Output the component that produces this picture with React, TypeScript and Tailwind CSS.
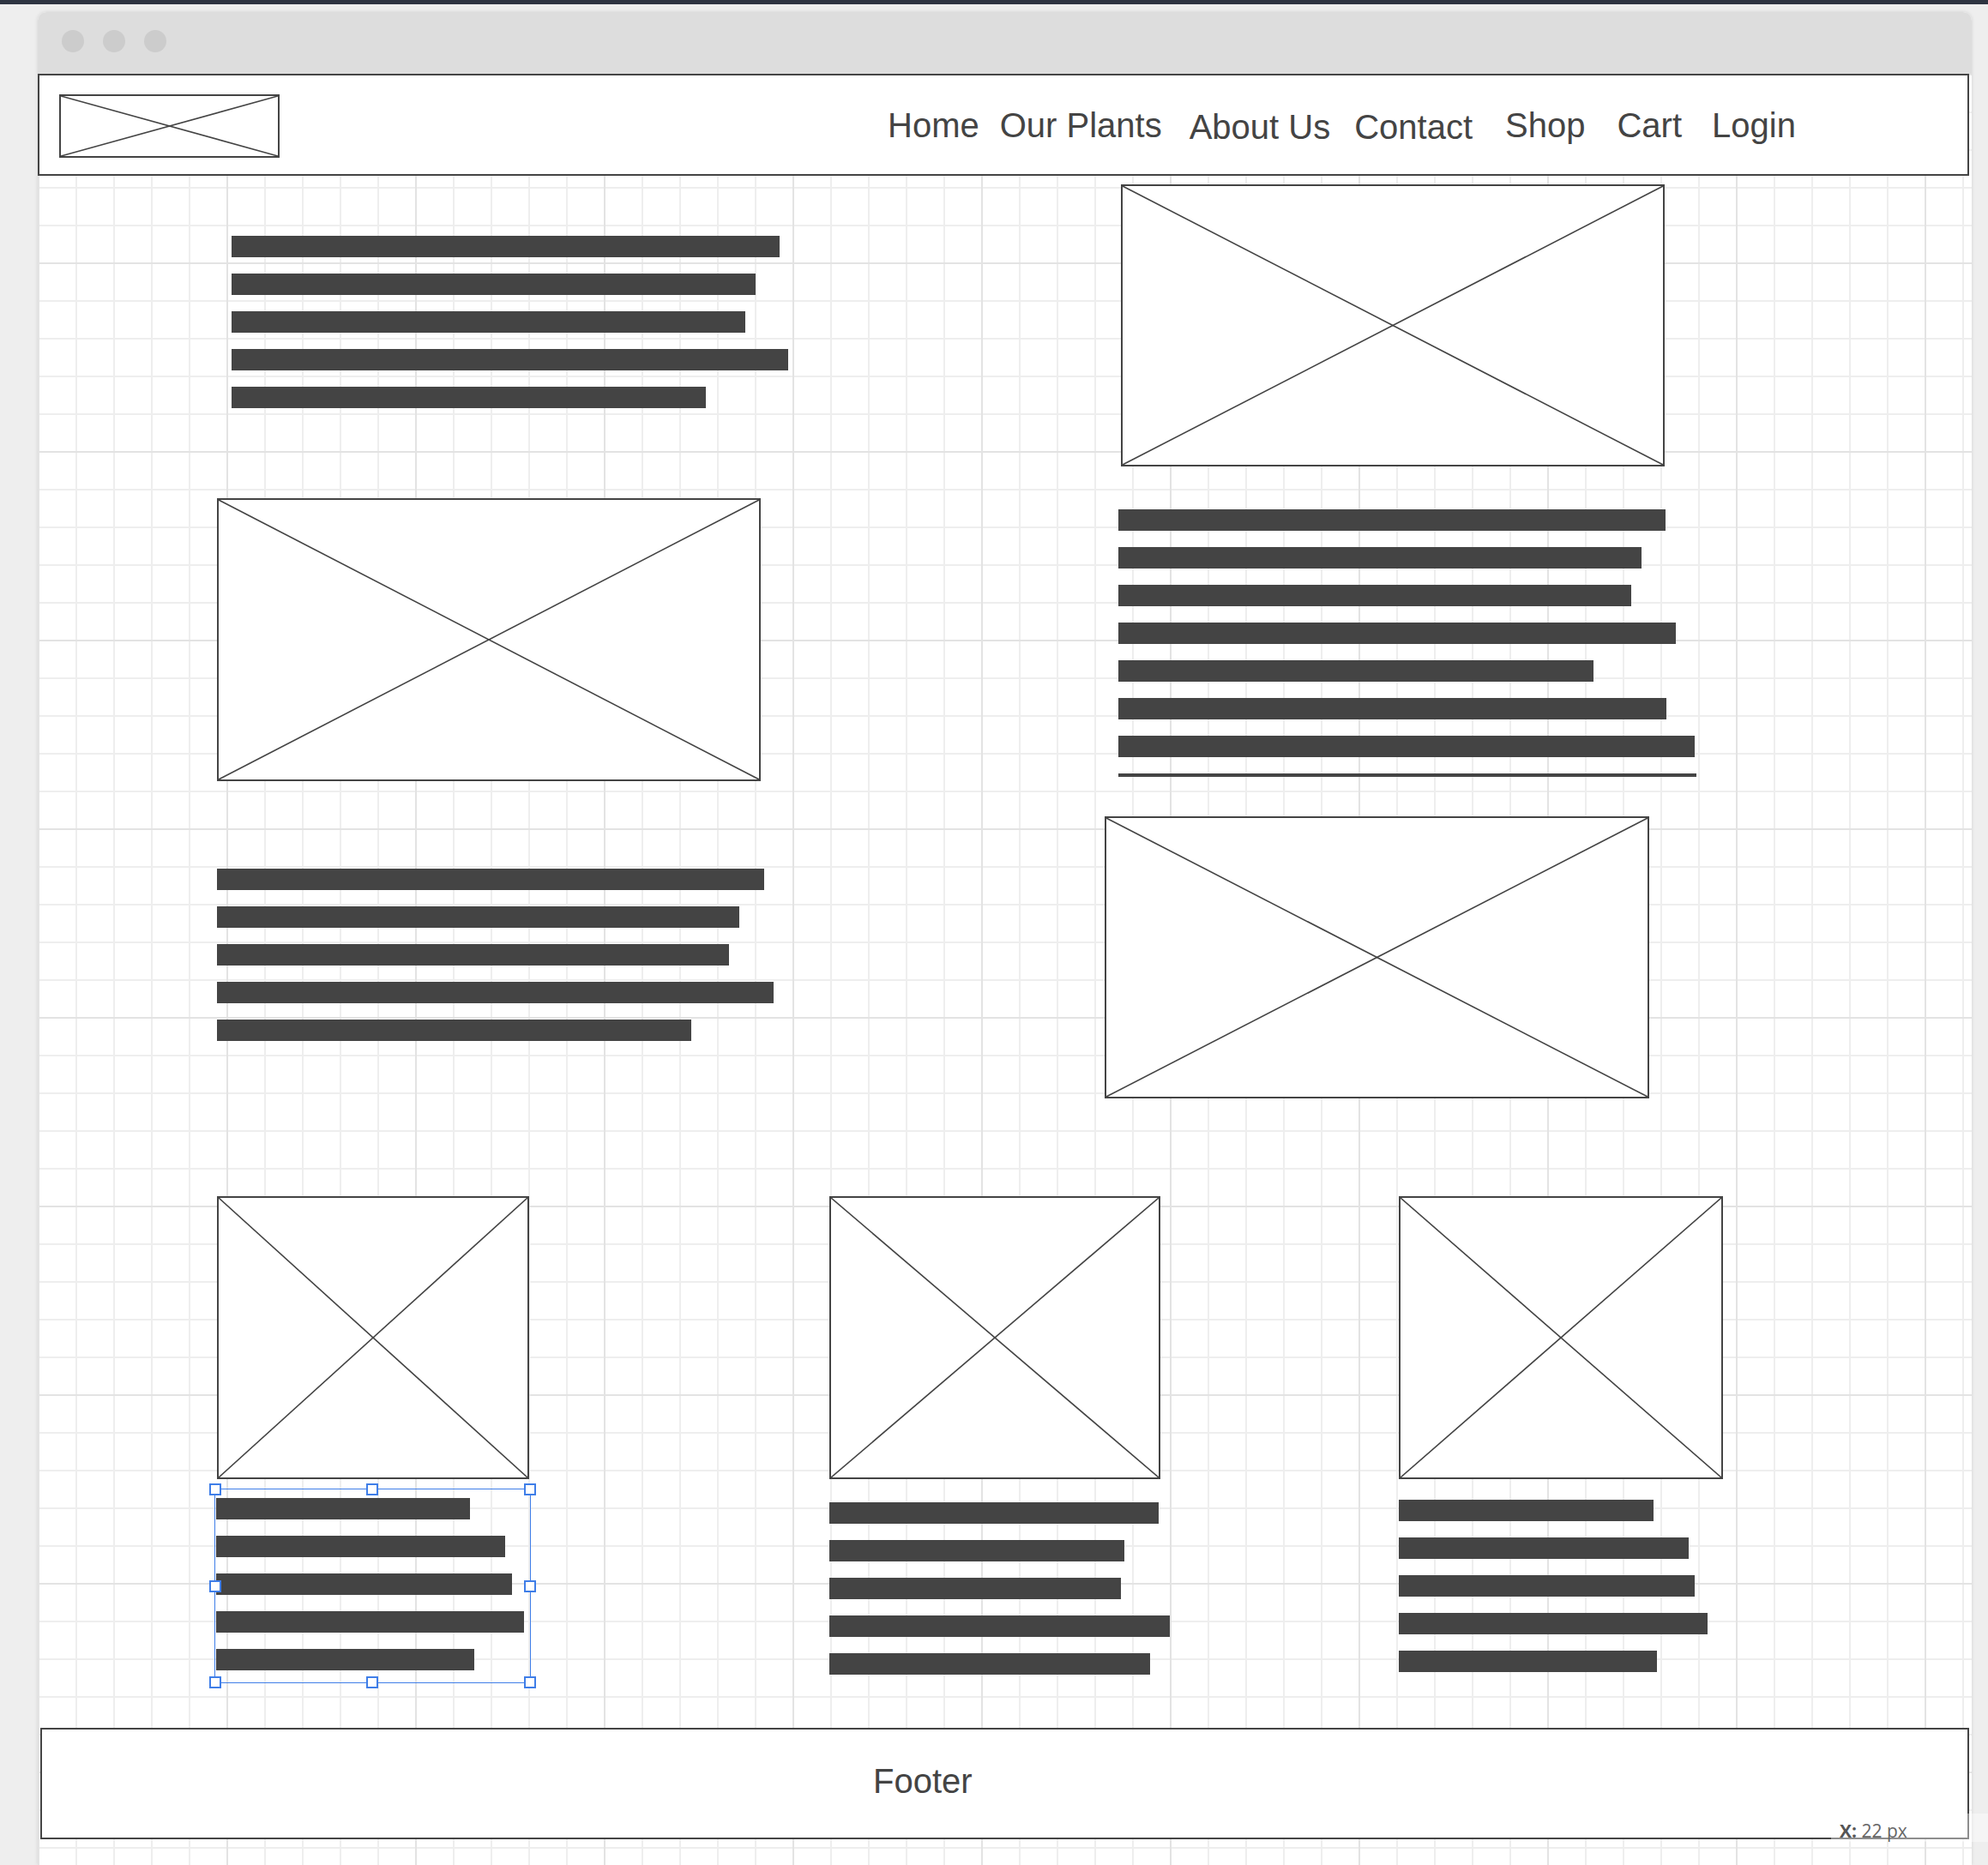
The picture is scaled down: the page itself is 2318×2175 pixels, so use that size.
import React from "react";

type BoxProps = { className: string };

// wireframe image placeholder: bordered box with an X across it
const Placeholder = ({ className }: BoxProps) => (
  <div className={`relative shrink-0 border-2 border-[#444444] bg-white ${className}`}>
    <svg
      className="absolute inset-0 h-full w-full"
      viewBox="0 0 100 100"
      preserveAspectRatio="none"
    >
      <line x1="0" y1="0" x2="100" y2="100" stroke="#444444" strokeWidth="1.6" vectorEffect="non-scaling-stroke" />
      <line x1="100" y1="0" x2="0" y2="100" stroke="#444444" strokeWidth="1.6" vectorEffect="non-scaling-stroke" />
    </svg>
  </div>
);

// fake text lines
const TextLines = ({ widths, className = "" }: { widths: number[]; className?: string }) => (
  <div className={`flex flex-col items-start gap-[19px] ${className}`}>
    {widths.map((w, i) => (
      <div key={i} className="h-[25px] shrink-0 bg-[#444444]" style={{ width: w }} />
    ))}
  </div>
);

const navLinks = [
  { label: "Home", className: "ml-[709px]" },
  { label: "Our Plants", className: "ml-[24px]" },
  { label: "About Us", className: "ml-[32px] mt-[4px]" },
  { label: "Contact", className: "ml-[28px] mt-[4px]" },
  { label: "Shop", className: "ml-[38px]" },
  { label: "Cart", className: "ml-[37px]" },
  { label: "Login", className: "ml-[35px]" },
];

const Handle = ({ className }: BoxProps) => (
  <div className={`absolute size-[14px] border-2 border-[#3f7ee8] bg-white ${className}`} />
);

export default function App() {
  return (
    <div className="relative h-[2175px] w-[2318px] overflow-hidden bg-[#eeeeee] font-['Liberation_Sans',Arial,sans-serif]">
      <div className="h-[5px] bg-[#2e3441]" />

      {/* browser window */}
      <div className="ml-[44px] mt-[9px] h-[2161px] w-[2255px] overflow-hidden rounded-t-[10px] bg-white shadow-[0_0_4px_rgba(0,0,0,0.12)]">
        <div className="flex h-[72px] items-center gap-[22px] bg-[#dddddd] pb-[4px] pl-[28px]">
          <span className="size-[26px] rounded-full bg-[#cccccc]" />
          <span className="size-[26px] rounded-full bg-[#cccccc]" />
          <span className="size-[26px] rounded-full bg-[#cccccc]" />
        </div>

        {/* canvas with grid */}
        <div className="flex h-[2089px] flex-col bg-white [background-image:linear-gradient(to_right,#e3e3e3_2px,transparent_2px),linear-gradient(to_bottom,#e3e3e3_2px,transparent_2px),linear-gradient(to_right,#eeeeee_2px,transparent_2px),linear-gradient(to_bottom,#eeeeee_2px,transparent_2px)] [background-size:220px_220px,220px_220px,44px_44px,44px_44px]">
          {/* header */}
          <nav className="flex h-[119px] w-[2252px] shrink-0 items-center border-2 border-[#444444] bg-white text-[40px] leading-none text-[#444444]">
            <Placeholder className="ml-[23px] mt-[22px] h-[74px] w-[257px] self-start" />
            {navLinks.map((link) => (
              <span key={link.label} className={`whitespace-nowrap ${link.className}`}>
                {link.label}
              </span>
            ))}
          </nav>

          {/* two column section */}
          <section className="flex items-start">
            <div className="ml-[209px] flex w-[634px] flex-col items-start">
              <TextLines className="ml-[17px] mt-[70px]" widths={[639, 611, 599, 649, 553]} />
              <Placeholder className="mt-[105px] h-[330px] w-[634px]" />
              <TextLines className="mt-[102px]" widths={[638, 609, 597, 649, 553]} />
            </div>
            <div className="ml-[401px] flex flex-col items-start">
              <Placeholder className="ml-[19px] mt-[10px] h-[329px] w-[634px]" />
              <TextLines className="ml-[16px] mt-[50px]" widths={[638, 610, 598, 650, 554, 639, 672]} />
              <div className="ml-[16px] mt-[19px] h-[4px] w-[674px] bg-[#444444]" />
              <Placeholder className="mt-[46px] h-[329px] w-[635px]" />
            </div>
          </section>

          {/* product row */}
          <section className="mt-[114px] flex items-start">
            <div className="ml-[209px] flex w-[364px] flex-col items-start">
              <Placeholder className="h-[330px] w-[364px]" />
              <div className="relative ml-[-1px] mt-[22px]">
                <TextLines widths={[296, 337, 345, 359, 301]} />
                <div className="absolute left-[-2px] top-[-11px] h-[227px] w-[369px] border-[1.5px] border-[#3f7ee8]">
                  <Handle className="left-[-7px] top-[-7px]" />
                  <Handle className="left-[176px] top-[-7px]" />
                  <Handle className="right-[-7px] top-[-7px]" />
                  <Handle className="left-[-7px] top-[106px]" />
                  <Handle className="right-[-7px] top-[106px]" />
                  <Handle className="bottom-[-7px] left-[-7px]" />
                  <Handle className="bottom-[-7px] left-[176px]" />
                  <Handle className="bottom-[-7px] right-[-7px]" />
                </div>
              </div>
            </div>
            <div className="ml-[350px] flex w-[386px] flex-col items-start">
              <Placeholder className="h-[330px] w-[386px]" />
              <TextLines className="mt-[27px]" widths={[384, 344, 340, 397, 374]} />
            </div>
            <div className="ml-[278px] flex w-[378px] flex-col items-start">
              <Placeholder className="h-[330px] w-[378px]" />
              <TextLines className="mt-[24px]" widths={[297, 338, 345, 360, 301]} />
            </div>
          </section>

          <footer className="ml-[3px] mt-[62px] flex h-[130px] w-[2249px] shrink-0 items-center border-2 border-[#444444] bg-white pb-[6px] pl-[969px] text-[40px] leading-none text-[#444444]">
            Footer
          </footer>
        </div>
      </div>

      {/* coordinate readout */}
      <div className="absolute left-[2135px] top-[2115px] h-[33px] w-[183px] bg-white/40 pl-[10px] pt-[10px] font-['Open_Sans',sans-serif] text-[21px] leading-none text-[#666666]">
        <span className="font-bold text-[#555555]">X:</span> 22 px
      </div>
    </div>
  );
}
